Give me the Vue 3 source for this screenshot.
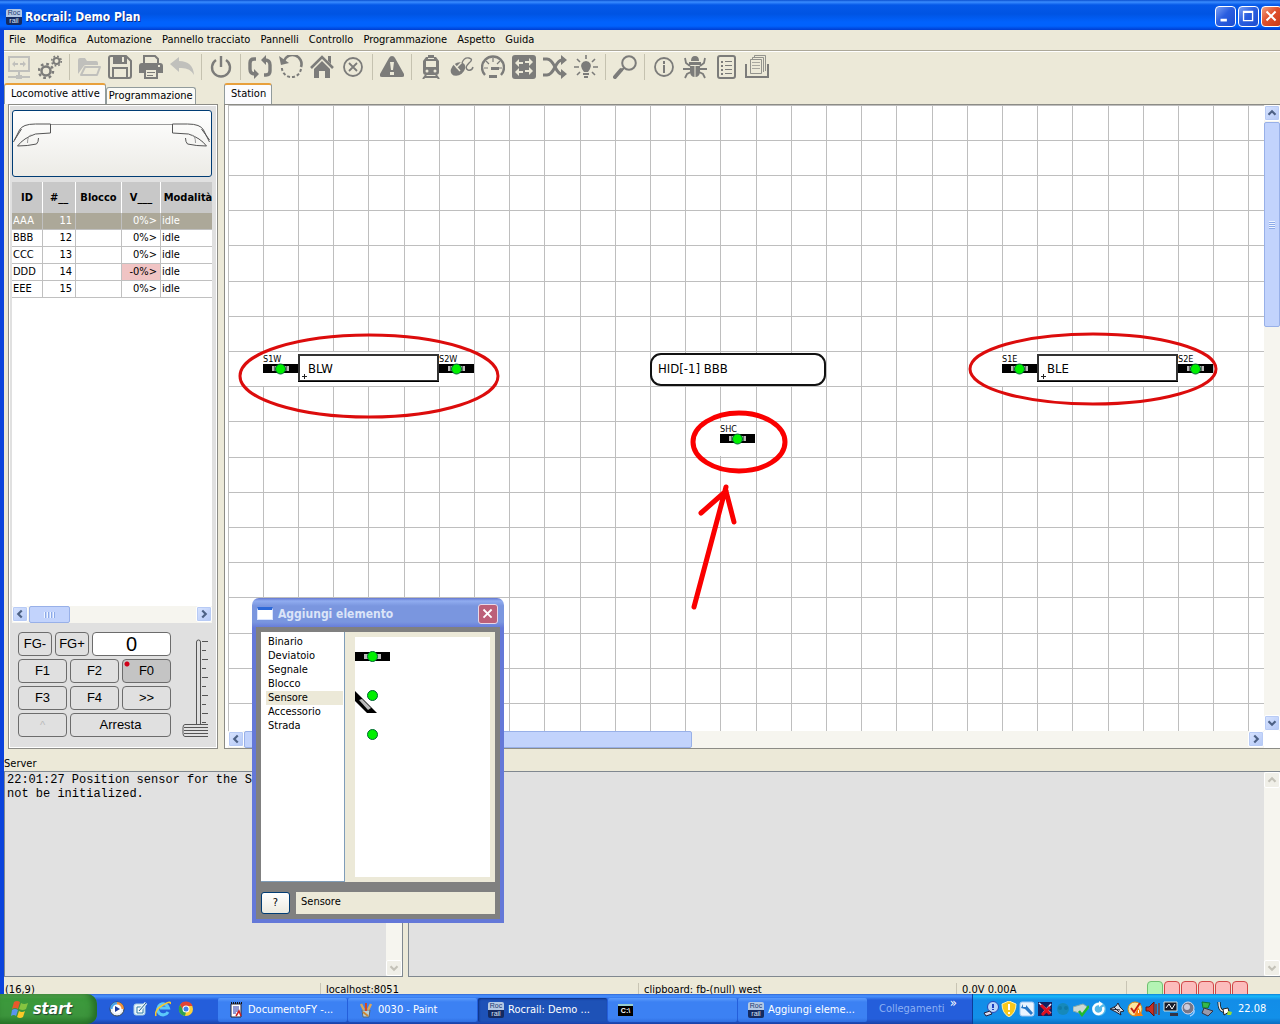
<script setup>
import { ref } from 'vue'

const menus = ['File', 'Modifica', 'Automazione', 'Pannello tracciato', 'Pannelli', 'Controllo', 'Programmazione', 'Aspetto', 'Guida']

const tools = [
  { name: 'Connetti', off: true, svg: '<path d="M2 2h20v14H2z" fill="none" stroke="currentColor" stroke-width="2"/><path d="M5 9l3-3v2h3v2H8v2zM19 9l-3-3v2h-3v2h3v2zM11 16h2v4h-2zM1 21h8v2H1zM15 21h8v2h-8zM9 20h6v4H9z"/>' },
  { name: 'Impostazioni', svg: '<circle cx="8" cy="16" r="4.5" fill="none" stroke="currentColor" stroke-width="2.5"/><circle cx="8" cy="16" r="7" fill="none" stroke="currentColor" stroke-width="2.5" stroke-dasharray="2.7 2.8"/><circle cx="18.5" cy="6" r="3" fill="none" stroke="currentColor" stroke-width="2"/><circle cx="18.5" cy="6" r="4.8" fill="none" stroke="currentColor" stroke-width="1.6" stroke-dasharray="1.8 1.97"/>' },
  { sep: true },
  { name: 'Apri', off: true, svg: '<path d="M1 19V5q0-2 2-2h5l2 3h9q2 0 2 2v2H9q-2 0-3 2z"/><path d="M4 20l4-8h15l-3 8z" fill="#ece9d8" stroke="currentColor" stroke-width="2" stroke-linejoin="round"/>' },
  { name: 'Salva', svg: '<path d="M3 1h15l5 5v15q0 2-2 2H3q-2 0-2-2V3q0-2 2-2z" fill="none" stroke="currentColor" stroke-width="2"/><path d="M5 1h14v8H5zM4 12h16v11H4z"/><path d="M14 2h2v5h-2zM6 14h12v8H6z" fill="#ece9d8"/>' },
  { name: 'Stampa', svg: '<path d="M5 8V1h11l3 3v4" fill="none" stroke="currentColor" stroke-width="2"/><path d="M3 8h18q3 0 3 3v7h-5v-3H5v3H0v-7q0-3 3-3z"/><path d="M6 14h12v9H6z" fill="#ece9d8" stroke="currentColor" stroke-width="2"/><path d="M8 17h8v1H8zM8 20h6v1H8z"/><path d="M19 10h2v2h-2z" fill="#ece9d8"/>' },
  { name: 'Annulla', off: true, svg: '<path d="M0 9l9-7v4q14 0 15 14-4-8-15-7v4z"/>' },
  { sep: true },
  { name: 'Alimentazione', svg: '<path d="M7 5a9 9 0 1 0 10 0M12 1v11" fill="none" stroke="currentColor" stroke-width="2.4"/>' },
  { sep: true },
  { name: 'Automatico', svg: '<path d="M8 4H6Q2 4 2 8v6q0 5 5 5M16 20h2q4 0 4-4v-6q0-5-5-5" fill="none" stroke="currentColor" stroke-width="3.4"/><path d="M6 14l5 5-5 5zM18 0l-5 5 5 5z"/>' },
  { name: 'Ripristina', svg: '<path d="M5 6a9 9 0 0 1 17 6" fill="none" stroke="currentColor" stroke-width="2.6"/><path d="M22 14a9 9 0 1 1-19-3" fill="none" stroke="currentColor" stroke-width="2" stroke-dasharray="3 2"/><path d="M0 1l2 9 8-2z"/>' },
  { name: 'Home', svg: '<path d="M1 13L12 2l11 11" fill="none" stroke="currentColor" stroke-width="2.6"/><path d="M4 14l8-8 8 8v9h-5v-7H9v7H4zM18 1h3v8l-3-3z"/>' },
  { name: 'Ferma tutto', svg: '<circle cx="12" cy="12" r="9" fill="none" stroke="currentColor" stroke-width="1.8"/><path d="M8 8l8 8M16 8l-8 8" stroke="currentColor" stroke-width="1.8"/>' },
  { sep: true },
  { name: 'Emergenza', svg: '<path d="M12 1q2 0 3 2l9 16q1 3-2 3H2q-3 0-2-3L9 3q1-2 3-2z"/><path d="M10 7h4l-1 8h-2zM10 17h4v3h-4z" fill="#ece9d8"/>' },
  { sep: true },
  { name: 'Locomotive', svg: '<path d="M9 0h6v2H9zM7 2h10l3 4v11q0 3-3 3H7q-3 0-3-3V6z"/><path d="M7 6h10v6H7zM9 3h6v1H9z" fill="#ece9d8"/><circle cx="8" cy="16" r="1.5" fill="#ece9d8"/><circle cx="16" cy="16" r="1.5" fill="#ece9d8"/><path d="M7 20l-3 4M17 20l3 4M6 22h12" stroke="currentColor" stroke-width="2"/>' },
  { name: 'Controller', svg: '<ellipse cx="8" cy="14" rx="8" ry="6" transform="rotate(-38 8 14)"/><path d="M3 8l7 8M6 13l6-6" stroke="#ece9d8" stroke-width="1.5"/><path d="M12 8Q14 2 19 3q5 1 0 5-5 5-1 7 4 1 5-3" fill="none" stroke="currentColor" stroke-width="1.4"/>' },
  { name: 'Velocità', svg: '<path d="M4 20a11 11 0 1 1 16 0" fill="none" stroke="currentColor" stroke-width="2.4"/><path d="M12 3v4M3 13h4M5 6l3 3M19 6l-3 3M17 13h4" stroke="currentColor" stroke-width="1.2"/><path d="M10 12h8v3h-8zM8 20h8v3H8z"/>' },
  { name: 'Scambi', svg: '<rect width="24" height="24" rx="3"/><path d="M3 8l4-4v3h4v2H7v3zM21 7l-4-4v3h-4v2h4v3zM3 17l4-4v3h4v2H7v3zM21 16l-4-4v3h-4v2h4v3z" fill="#ece9d8"/>' },
  { name: 'Itinerari', svg: '<path d="M0 4h4q4 0 8 8t8 7M0 20h4q4 0 8-8t8-7" fill="none" stroke="currentColor" stroke-width="3"/><path d="M18 0l6 5-6 5zM18 14l6 5-6 5z"/>' },
  { name: 'Luci', svg: '<path d="M12 6a5 5 0 0 1 4 8l-2 3h-4l-2-3a5 5 0 0 1 4-8zM9 18h6v2H9zM10 21h4v2h-4z"/><path d="M12 0v4M0 12h5M19 12h5M3 4l3 3M21 4l-3 3M3 20l3-3M21 20l-3-3" stroke="currentColor" stroke-width="1.6"/>' },
  { sep: true },
  { name: 'Cerca', svg: '<circle cx="16" cy="8" r="6.8" fill="none" stroke="currentColor" stroke-width="2"/><path d="M11 13l-3 3" stroke="currentColor" stroke-width="2"/><path d="M8 15l-6 7" stroke="currentColor" stroke-width="4" stroke-linecap="round"/>' },
  { sep: true },
  { name: 'Informazioni', svg: '<circle cx="12" cy="12" r="9" fill="none" stroke="currentColor" stroke-width="1.8"/><path d="M11 6h2v3h-2zM11 10h2v8h-2z"/>' },
  { name: 'Debug', svg: '<path d="M8 6q0-5 4-5t4 5zM6 7h12v3H6zM7 11h10v5q0 6-5 6t-5-6z"/><path d="M12 11v11" stroke="#ece9d8"/><path d="M7 11L3 8 2 3M17 11l4-3 1-5M7 14H0M17 14h7M8 17l-4 2-2 4M16 17l4 2 2 4" fill="none" stroke="currentColor" stroke-width="1.8"/>' },
  { name: 'Registro', svg: '<rect x="4" y="1" width="17" height="22" rx="2" fill="none" stroke="currentColor" stroke-width="2"/><path d="M7 6h2v2H7zM11 6h7v1h-7zM7 10h2v2H7zM11 10h7v1h-7zM7 14h2v2H7zM11 14h7v1h-7zM7 18h2v2H7zM11 18h7v1h-7z"/>' },
  { name: 'Archivio', svg: '<path d="M1 9v13h22V9" fill="none" stroke="currentColor" stroke-width="2"/><path d="M5.500 4.500h11v14h-11zM7.500 4V2.500h11V17M9.500 2V.5h11V16" fill="none" stroke="currentColor" stroke-width=".8"/><path d="M7 7.500h8M7 10.500h8M7 13.500h8" stroke="currentColor" stroke-width=".6"/>' }
]

const locos = [
  { id: 'AAA', n: 11, v: '0%>', sel: true },
  { id: 'BBB', n: 12, v: '0%>' },
  { id: 'CCC', n: 13, v: '0%>' },
  { id: 'DDD', n: 14, v: '-0%>', neg: true },
  { id: 'EEE', n: 15, v: '0%>' }
]

// The plan is drawn on a grid whose cells measure 176/5 px
const line = k => Math.floor(k * 176 / 5)
const lines = Array.from({ length: 60 }, (_, k) => line(k))
const sensors = [
  { id: 'S1W', col: 1, row: 7 }, { id: 'S2W', col: 6, row: 7 }, { id: 'SHC', col: 14, row: 9 },
  { id: 'S1E', col: 22, row: 7 }, { id: 'S2E', col: 27, row: 7 }
]
const blocks = [{ id: 'BLW', col: 2, row: 7 }, { id: 'BLE', col: 23, row: 7 }]

const kinds = ['Binario', 'Deviatoio', 'Segnale', 'Blocco', 'Sensore', 'Accessorio', 'Strada']
const kind = ref('Sensore')
const speed = ref('0')

const tasks = [
  { text: 'DocumentoFY -...', icon: 'doc' },
  { text: '0030 - Paint', icon: 'paint' },
  { text: 'Rocrail: Demo ...', icon: 'roc', on: true },
  { text: '', icon: 'cmd' },
  { text: 'Aggiungi eleme...', icon: 'roc' }
]
const leds = ['g', 'r', 'r', 'r', 'r', 'r']

const quick = [
  '<circle cx="8" cy="8" r="7" fill="#e9eef6" stroke="#345"/><path d="M8 1a7 7 0 0 1 7 7h-4L8 4z" fill="#f0913a"/><path d="M1 8a7 7 0 0 1 7-7v4L5 8z" fill="#4aa3e8"/><circle cx="8" cy="8" r="4.5" fill="#fff"/><path d="M6 5l5 3-5 3z" fill="#1c3a9c"/>',
  '<rect x="2" y="3" width="11" height="11" rx="2" fill="#e8f4fa" stroke="#a8d0e4"/><path d="M5 6h6v6H5z" fill="#fff" stroke="#2b7ba8"/><path d="M7 10l7-8" stroke="#e8f4fa" stroke-width="3"/><path d="M7 10l7-8" stroke="#1f5f90"/>',
  '<path d="M13 11a5.500 5.500 0 1 1 .5-4H5" fill="none" stroke="#5cc8fa" stroke-width="3"/><path d="M1 15Q-1 9 8 4t7-1" fill="none" stroke="#f7c92e" stroke-width="1.5"/>',
  '<circle cx="8" cy="8" r="7" fill="#fcd13a"/><path d="M2 4a7 7 0 0 1 12.500 1H8L5 9z" fill="#e24335"/><path d="M2 4l4 6 2 1-1 4A7 7 0 0 1 2 4z" fill="#2fa04f"/><circle cx="8" cy="8" r="3.500" fill="#fff"/><circle cx="8" cy="8" r="2.500" fill="#3f80ee"/>'
]
const tray = [
  '<circle cx="10" cy="6" r="5.500" fill="#b9d4fa" stroke="#2448b8"/><path d="M9 3h2v4H9zM9 8h2v1H9z" fill="#2040c0"/><path d="M1 12l6-2 2 3-6 2z" fill="#dde" stroke="#224"/>',
  '<path d="M8 0l7 3q0 9-7 13Q1 12 1 3z" fill="#f8c81c" stroke="#fff3b0"/><path d="M7 3h2v6H7zM7 11h2v2H7z" fill="#fff"/>',
  '<rect x="1" y="1" width="14" height="14" rx="2" fill="#eaf4ff" stroke="#9cc4f0"/><path d="M4 3v3h3V4l7 8-2 2-6-6-4-1z" fill="#2878c8"/>',
  '<path d="M1 1h14v14H1z" fill="#152060"/><path d="M2 2l12 10M6 12l8-9" stroke="#e8e8ff" stroke-width="1.500"/><path d="M4 4l9 9M13 6l-8 8" stroke="#e01020" stroke-width="3"/>',
  '<circle cx="8" cy="8" r="6" fill="#1689ba"/><circle cx="5" cy="7" r="2" fill="#107aa8"/><circle cx="11" cy="7" r="2" fill="#107aa8"/>',
  '<path d="M0 6l10-3 6 4-7 6-9-3z" fill="#ccd8d4" stroke="#8aa"/><path d="M6 10l3 4 7-9" fill="none" stroke="#20b830" stroke-width="2.500"/>',
  '<circle cx="8" cy="8" r="7" fill="#55b8e8"/><path d="M12 6a5 5 0 1 1-4-3" fill="none" stroke="#fff" stroke-width="2.500"/><path d="M8 0l4 3-4 3z" fill="#fff"/>',
  '<path d="M1 8l6-3 2-3 2 4 4 4-4 1 1 3-5-3z" fill="#d8dde6" stroke="#223"/><path d="M2 8l9 1M5 6l5 5" stroke="#223"/>',
  '<circle cx="8" cy="8" r="7" fill="#fbe6a0" stroke="#d88a10"/><path d="M4 7l3 4 6-9" fill="none" stroke="#c82010" stroke-width="2"/><path d="M11 6l5 9H7z" fill="#f88010"/><path d="M11 9h1v3h-1z" fill="#fff"/>',
  '<path d="M1 6h3l5-5v14l-5-5H1z" fill="#c83020" stroke="#601010"/><path d="M11 3v10M14 2v12" stroke="#80382c" stroke-width="1.500"/>',
  '<path d="M1 1h13v9H1z" fill="#181c28" stroke="#cdd"/><path d="M3 7l3-4 3 5 3-5" fill="none" stroke="#fff"/><path d="M7 12h8v3H7z" fill="#334"/>',
  '<circle cx="7" cy="7" r="6" fill="#778" stroke="#dde"/><circle cx="6" cy="6" r="3" fill="#ccd"/><path d="M13 9q1 4-4 6" fill="none" stroke="#9cf" stroke-width="1.500"/>',
  '<path d="M3 1l8 1-2 5H4z" fill="#38b848" stroke="#173"/><path d="M5 7l9 3-5 5-6-3z" fill="#99a" stroke="#334"/>',
  '<path d="M2 1q0 8 4 9l6 1" fill="none" stroke="#111" stroke-width="3"/><path d="M2 1q0 8 4 9l6 1" fill="none" stroke="#eee" stroke-width="1.500"/><path d="M6 8l5-1 1 4-5 3z" fill="#fff" stroke="#222"/><path d="M11 10l4 1-1 3-4 0z" fill="#9d3"/>'
]
</script>

<template>
  <div class="screen">
    <header class="titlebar">
      <span class="roc"><i>Roc</i><i>rail</i></span>
      <h1>Rocrail: Demo Plan</h1>
      <div class="winbtns">
        <button aria-label="Riduci a icona"><svg viewBox="0 0 21 21"><path d="M5 13h7v3H5z" fill="#fff" /></svg></button>
        <button aria-label="Ingrandisci"><svg viewBox="0 0 21 21"><path d="M5 5h10v10H5zM5 6h10" fill="none" stroke="#fff" stroke-width="1.500" /></svg></button>
        <button class="red" aria-label="Chiudi"><svg viewBox="0 0 21 21"><path d="M5 5l10 10M15 5L5 15" stroke="#fff" stroke-width="2.200" /></svg></button>
      </div>
    </header>

    <div class="window">
      <nav class="menubar"><button v-for="m in menus" :key="m">{{ m }}</button></nav>
      <div class="toolbar">
        <template v-for="(t, i) in tools" :key="i">
          <span v-if="t.sep" class="sep"></span>
          <button v-else :class="{ off: t.off }" :aria-label="t.name"><svg viewBox="0 0 24 24" fill="currentColor" v-html="t.svg"></svg></button>
        </template>
      </div>

      <main>
        <section class="left">
          <div class="tabs"><button class="tab on">Locomotive attive</button><button class="tab">Programmazione</button></div>
          <div class="panel">
            <button class="locoimg" aria-label="Immagine locomotiva">
              <svg viewBox="0 0 197 64" fill="none" stroke="#555">
                <path d="M37 12.500h122" stroke="#999" />
                <path d="M37 12v9l-15 1Q10 26 4 34q10 0 19-2 2-2 2-6M37 12H22Q9 12 6 18L0 30M8 17L1 28" />
                <path d="M14 31q0-8 4-8" stroke="#999" />
                <path d="M159 12v9l16 1q12 4 18 12-10 0-19-2-2-2-2-6M159 12h15q13 0 16 6l6 12M188 17l8 11" />
                <path d="M182 31q0-8-4-8" stroke="#999" />
              </svg>
            </button>
            <div class="tablebox">
              <table>
                <colgroup><col class="c1"><col class="c2"><col class="c3"><col class="c4"><col class="c5"></colgroup>
                <thead><tr><th>ID</th><th>#__</th><th>Blocco</th><th>V___</th><th>Modalità</th></tr></thead>
                <tbody>
                  <tr v-for="l in locos" :key="l.id" :class="{ sel: l.sel }">
                    <td>{{ l.id }}</td><td class="num">{{ l.n }}</td><td></td><td class="num" :class="{ neg: l.neg }">{{ l.v }}</td><td>idle</td>
                  </tr>
                </tbody>
              </table>
            </div>
            <div class="hscroll small">
              <button class="sb" aria-label="Sinistra"><svg viewBox="0 0 16 16"><path d="M10 4L6 8l4 4" /></svg></button>
              <span class="thumb grip"></span><span class="space"></span>
              <button class="sb" aria-label="Destra"><svg viewBox="0 0 16 16"><path d="M6 4l4 4-4 4" /></svg></button>
            </div>
            <div class="throttle">
              <div class="keys">
                <div class="krow"><button class="fg">FG-</button><button class="fg">FG+</button><input v-model="speed" aria-label="Velocità"></div>
                <div class="krow"><button>F1</button><button>F2</button><button class="pressed">F0</button></div>
                <div class="krow"><button>F3</button><button>F4</button><button>&gt;&gt;</button></div>
                <div class="krow"><button class="dim">^</button><button class="wide">Arresta</button></div>
              </div>
              <svg class="slider" viewBox="0 0 26 100" fill="none" stroke="#555">
                <path d="M14.500 87V5q0-2 2-2t2 2v82M20 4.500h6M20 13.500h4M20 22.500h6M20 31.500h4M20 40.500h6M20 49.500h4M20 58.500h6M20 67.500h4M20 76.500h6M20 85.500h4" />
                <path d="M26 87.500H3q-2 0-2 3v6q0 3 2 3h23M2 90.500h24M2 93.500h24M2 96.500h24" />
              </svg>
            </div>
          </div>
        </section>

        <section class="right">
          <div class="tabs"><button class="tab on">Station</button></div>
          <div class="planbox">
            <div class="planrow">
              <svg class="plan">
                <g stroke="#bebebe" shape-rendering="crispEdges">
                  <line v-for="x in lines" :key="'x' + x" :x1="x + 0.5" :x2="x + 0.5" y1="0" y2="2000" />
                  <line v-for="y in lines" :key="'y' + y" :y1="y + 0.5" :y2="y + 0.5" x1="0" x2="2000" />
                </g>
                <g v-for="s in sensors" :key="s.id" :transform="`translate(${line(s.col)} ${line(s.row)})`">
                  <rect y="1" width="35" height="34" fill="#fff" />
                  <rect y="13" width="35" height="9" />
                  <rect x="9" y="15" width="17" height="5" fill="#bbb" />
                  <path d="M11.500 15v5M23.500 15v5" stroke="#666" />
                  <circle cx="17.500" cy="18" r="5" fill="#00f000" stroke="#063" />
                  <text x="0" y="11" class="tiny">{{ s.id }}</text>
                </g>
                <g v-for="b in blocks" :key="b.id" :transform="`translate(${line(b.col)} ${line(b.row)})`">
                  <rect y="1" width="140" height="34" fill="#fff" />
                  <rect x="1" y="4" width="139" height="26" fill="#fff" stroke="#333" stroke-width="2" />
                  <path d="M0 30.500h141" stroke="#000" />
                  <path d="M4 25.500h5M6.500 23v5" stroke="#222" />
                  <text x="10" y="22" class="name">{{ b.id }}</text>
                </g>
                <rect x="423" y="249" width="174" height="31" rx="10" fill="#fff" stroke="#111" stroke-width="2" />
                <text x="430" y="268" class="name">HID[-1] BBB</text>
                <g fill="none" stroke="#dc0c0c" stroke-width="3">
                  <ellipse cx="141" cy="271" rx="129" ry="41" />
                  <ellipse cx="865" cy="264" rx="123" ry="35" />
                </g>
                <g fill="none" stroke="#fa0000" stroke-width="5" stroke-linecap="round">
                  <ellipse cx="511" cy="337" rx="46" ry="29" />
                  <path d="M466 502L498 382M498 386L473 408M498 386L506 417" />
                </g>
              </svg>
              <div class="vscroll">
                <button class="sb" aria-label="Su"><svg viewBox="0 0 16 16"><path d="M4 10l4-4 4 4" /></svg></button>
                <span class="thumb vgrip"></span><span class="space"></span>
                <button class="sb" aria-label="Giù"><svg viewBox="0 0 16 16"><path d="M4 6l4 4 4-4" /></svg></button>
              </div>
            </div>
            <div class="hscroll big">
              <button class="sb" aria-label="Sinistra"><svg viewBox="0 0 16 16"><path d="M10 4L6 8l4 4" /></svg></button>
              <span class="thumb"></span><span class="space"></span>
              <button class="sb" aria-label="Destra"><svg viewBox="0 0 16 16"><path d="M6 4l4 4-4 4" /></svg></button>
            </div>
          </div>
        </section>
      </main>

      <h2>Server</h2>
      <div class="logs">
        <div class="log first"><p>22:01:27 Position sensor for the Se<br>not be initialized.</p>
          <div class="vscroll dead"><span class="space"></span><button class="sb" aria-label="Giù"><svg viewBox="0 0 16 16"><path d="M4 6l4 4 4-4" /></svg></button></div>
        </div>
        <div class="log second">
          <div class="vscroll dead"><button class="sb" aria-label="Su"><svg viewBox="0 0 16 16"><path d="M4 10l4-4 4 4" /></svg></button><span class="space"></span><button class="sb" aria-label="Giù"><svg viewBox="0 0 16 16"><path d="M4 6l4 4 4-4" /></svg></button></div>
        </div>
      </div>
      <footer class="status">
        <span>(16,9)</span><span>localhost:8051</span><span>clipboard: fb-(null) west</span><span>0.0V 0.00A</span>
        <span class="leds"><i v-for="(l, i) in leds" :key="i" :class="l"></i></span>
      </footer>
    </div>

    <div class="taskbar">
      <button class="start">
        <svg viewBox="0 0 18 18"><path d="M3 2q3-2 6 0L7 9Q4 7 1 9z" fill="#e8582c" /><path d="M10 3q3 2 7 0l-2 6q-3 2-7 0z" fill="#86c440" /><path d="M1 10q3-2 6 0l-2 6q-2-2-5 0z" fill="#5a94ee" /><path d="M8 11q3 2 6 0l-2 6q-3 2-6 0z" fill="#fbc928" /></svg>
        <b>start</b>
      </button>
      <div class="quick"><svg v-for="(q, i) in quick" :key="i" viewBox="0 0 16 16" v-html="q"></svg></div>
      <div class="tasks">
        <button v-for="(t, i) in tasks" :key="i" :class="{ on: t.on }" :aria-label="t.text || 'Prompt dei comandi'">
          <span v-if="t.icon === 'roc'" class="roc"><i>Roc</i><i>rail</i></span>
          <span v-else-if="t.icon === 'cmd'" class="cmd">C:\</span>
          <svg v-else-if="t.icon === 'doc'" viewBox="0 0 16 16"><path d="M3 2h10v13H3z" fill="#fff" stroke="#223" /><path d="M3 1h11" stroke="#111" stroke-width="2" stroke-dasharray="1 1" /><path d="M5 5h6M5 7h6M5 9h6M5 11h3" stroke="#2233a8" /><path d="M8 14l3-5 2 5" fill="none" stroke="#d02020" stroke-width="1.500" /></svg>
          <svg v-else viewBox="0 0 16 16"><path d="M4 8h8l-1 7H5z" fill="#b8d0d8" stroke="#567" /><path d="M6 8L3 2M10 8l3-6" stroke="#d8a860" stroke-width="2.500" /><path d="M8 9V1" stroke="#d04828" stroke-width="2" /><path d="M5 10l5 4" stroke="#c83" stroke-width="2" /></svg>
          <span>{{ t.text }}</span>
        </button>
      </div>
      <div class="links"><span>Collegamenti</span><b>»</b></div>
      <div class="tray"><svg v-for="(q, i) in tray" :key="i" viewBox="0 0 16 16" v-html="q"></svg><time>22.08</time></div>
    </div>

    <div class="dialog" role="dialog" aria-label="Aggiungi elemento">
      <div class="dtitle"><span class="dico"></span><b>Aggiungi elemento</b>
        <button aria-label="Chiudi"><svg viewBox="0 0 20 20"><path d="M5 5l9 9M14 5l-9 9" stroke="#fff" stroke-width="2" /></svg></button>
      </div>
      <div class="dbody">
        <div class="dmain">
          <div class="kinds"><button v-for="k in kinds" :key="k" :class="{ on: k === kind }" @click="kind = k">{{ k }}</button></div>
          <div class="preview">
            <svg viewBox="0 0 135 240" preserveAspectRatio="xMinYMin">
              <rect y="15" width="35" height="9" /><rect x="9" y="17" width="17" height="5" fill="#bbb" />
              <path d="M0 54L22 76H12L0 64z" /><path d="M4 63l3-1 9 9-3 2z" fill="#bbb" />
              <g fill="#00f000" stroke="#063"><circle cx="17.500" cy="19.500" r="5" /><circle cx="17.500" cy="58.500" r="5" /><circle cx="17.500" cy="97.500" r="5" /></g>
            </svg>
          </div>
        </div>
        <div class="dfoot"><button aria-label="Aiuto">?</button><input :value="kind" readonly aria-label="Tipo"></div>
      </div>
    </div>
  </div>
</template>

<style>
body { margin: 0; }
</style>

<style scoped>
* { box-sizing: border-box; }
.screen { position: relative; display: flex; flex-direction: column; height: 100vh; overflow: hidden; background: #ece9d8; color: #000; font: 11px/14px "DejaVu Sans Condensed", Tahoma, sans-serif; }
button, input { font: inherit; color: inherit; margin: 0; padding: 0; border: 0; background: none; }
svg { display: block; }
i { font-style: normal; }
.titlebar { flex: none; display: flex; align-items: center; height: 30px; padding: 3px 0 0 6px; background: linear-gradient(#0a4fd0, #3a8cff 2px, #0458e8 5px, #0054e3 14px, #0162fd 22px, #0162fd 26px, #003dd0 30px); }
h1 { flex: 1; margin: 0 0 0 3px; color: #fff; font: bold 12px/16px "DejaVu Sans Condensed", sans-serif; text-shadow: 1px 1px #0a2c88; }
.roc { flex: none; display: flex; flex-direction: column; width: 16px; height: 16px; border-radius: 2px; background: linear-gradient(#b4c8e4 50%, #142a60 50%); color: #1c3870; font: 7px/8px "Liberation Sans", sans-serif; text-align: center; }
.roc i + i { color: #dde6f8; }
.winbtns { display: flex; gap: 2px; margin-right: -2px; }
.winbtns button { width: 21px; height: 21px; border: 1px solid #fff; border-radius: 4px; background: linear-gradient(135deg, #7ba0f4, #2a5ee0 45%, #1c4cd0); }
.winbtns .red { background: linear-gradient(135deg, #f0a080, #e0502c 45%, #c83a18); }
.window { flex: 1; min-height: 0; display: flex; flex-direction: column; border-left: 4px solid #0b43dc; }
.menubar { flex: none; display: flex; gap: 10px; height: 21px; padding-left: 5px; border-bottom: 1px solid #aca899; }
.toolbar { flex: none; display: flex; align-items: center; height: 32px; padding-bottom: 2px; border-top: 1px solid #fff; }
.toolbar button { width: 31px; padding: 0 4px 0 3px; color: #7c7c7a; }
.toolbar .off { color: #c0c0bc; }
.toolbar svg { width: 24px; height: 24px; }
.sep { width: 1px; height: 26px; margin: 0 4px 0 3px; background: #c5c2b0; }
main { flex: 1; min-height: 0; display: flex; gap: 6px; }
.left { flex: none; width: 214px; display: flex; flex-direction: column; }
.tabs { flex: none; display: flex; align-items: flex-end; height: 21px; }
.tab { height: 17px; padding: 0 2px; border: 1px solid #919b9c; border-bottom: 0; border-radius: 3px 3px 0 0; background: #fafaf6; }
.tab.on { height: 21px; padding: 0 5px 2px 6px; border-top: 2px solid #e8a03c; background: #fcfcfe; }
.panel { flex: 1; min-height: 0; display: flex; flex-direction: column; margin: 0 0 1px 4px; padding: 4px 4px 0 3px; border: 2px solid #8c8c86; border-width: 2px 2px 2px 1px; outline: 1px solid #fff; outline-offset: -2px; background: #e0e0e0; }
.locoimg { flex: none; height: 67px; border: 1px solid #003c74; border-radius: 3px; background: linear-gradient(#fff, #ecebe6); }
.locoimg svg { width: 100%; height: 64px; }
.tablebox { flex: 1; min-height: 0; margin-top: 5px; overflow: hidden; background: #fff; }
table { width: 204px; table-layout: fixed; border-collapse: separate; border-spacing: 0; }
.c1 { width: 31px; } .c2 { width: 33px; } .c3 { width: 46px; } .c4 { width: 39px; } .c5 { width: 55px; }
th { height: 31px; padding: 0; background: #c8c8c8; border-right: 1px solid #fff; font: bold 11px/14px "DejaVu Sans Condensed", sans-serif; white-space: nowrap; }
td { height: 17px; padding: 0 1px; border: solid #c0c0c0; border-width: 0 1px 1px 0; line-height: 14px; }
.num { text-align: right; }
td.num { padding-right: 3px; }
.sel td { background: #aca899; color: #fff; }
td.neg { background: #f0c4c4; }
.hscroll { flex: none; display: flex; height: 17px; background: #f6f5ef; }
.sb { flex: none; width: 16px; height: 16px; border: 1px solid #fff; border-radius: 2px; background: linear-gradient(135deg, #d8e4ff, #b4c8f6); box-shadow: inset 0 0 0 1px #b8cbf5; }
.sb svg { width: 14px; height: 14px; fill: none; stroke: #4d6185; stroke-width: 2.500; }
.thumb { flex: none; border: 1px solid #98b0e8; border-radius: 2px; background: #c2d3fc; }
.grip { background: repeating-linear-gradient(90deg, #eef4ff 0 1px, #8caae8 1px 2px, #c2d3fc 2px 3px) center / 12px 6px no-repeat #c2d3fc; }
.vgrip { background: repeating-linear-gradient(#eef4ff 0 1px, #8caae8 1px 2px) center / 6px 8px no-repeat #c2d3fc; }
.space { flex: 1; }
.small .thumb { width: 41px; margin-left: 1px; }
.big .thumb { width: 448px; }
.throttle { flex: none; display: flex; justify-content: space-between; height: 124px; padding: 9px 4px 0 6px; }
.keys { display: flex; flex-direction: column; gap: 3px; width: 153px; }
.krow { display: flex; gap: 3px; height: 24px; }
.krow button, .krow input { flex: 1 1 0; min-width: 0; height: 24px; border: 1px solid #6c6c6c; border-radius: 4px; font: 13px/20px "Liberation Sans", sans-serif; text-align: center; }
.krow .fg { flex: none; width: 34px; }
.krow input { background: #fff; font-size: 20px; }
.krow .wide { flex: none; width: 101px; }
.krow .pressed { background: radial-gradient(circle at 4px 4px, #d00018 2px, transparent 3px) #c4c4c4; }
.krow .dim { color: #bbb; font-size: 11px; }
.slider { width: 26px; height: 100px; margin-top: 5px; }
.right { flex: 1; min-width: 0; display: flex; flex-direction: column; }
.planbox { flex: 1; min-height: 0; display: flex; flex-direction: column; margin-bottom: 1px; border: solid #8c8c86; border-width: 1px 0 1px 1px; padding-left: 3px; background: #fff; }
.planrow { flex: 1; min-height: 0; display: flex; }
.plan { flex: 1; min-width: 0; height: 100%; overflow: hidden; }
.vscroll { flex: none; display: flex; flex-direction: column; width: 16px; background: #f6f5ef; }
.planrow .vscroll .thumb { height: 205px; margin-top: 1px; }
.big { margin-right: 16px; }
.tiny { font: 9px "DejaVu Sans Condensed", sans-serif; }
.name { font: 13px "DejaVu Sans Condensed", sans-serif; }
h2 { flex: none; margin: 0; padding: 7px 0 0; height: 21px; font: inherit; }
.logs { flex: none; display: flex; gap: 5px; height: 206px; }
.log { display: flex; justify-content: flex-end; border: 1px solid #808890; background: #e1e1e1; }
.first { flex: none; width: 399px; }
.second { flex: 1; border-right: 0; }
.log p { flex: 1; margin: 1px 0 0 2px; font: 12px/14px "Liberation Mono", monospace; white-space: nowrap; }
.dead .sb { background: #f0efe8; box-shadow: none; }
.dead .sb svg { stroke: #c4c2b8; }
.status { flex: none; display: flex; height: 17px; padding-top: 6px; overflow: hidden; }
.status span { flex: none; width: 318px; padding-left: 1px; white-space: nowrap; }
.status span + span { padding-left: 5px; border-left: 1px solid #c8c4b4; }
.status span:nth-child(1) { width: 316px; }
.status span:nth-child(4) { width: 170px; }
.status .leds { display: flex; flex: 1; gap: 1px; padding-left: 20px; margin-top: -2px; }
.leds i { width: 16px; height: 18px; border: 1px solid #d04848; border-radius: 4px 4px 0 0; background: #fcbcbc; }
.leds .g { border-color: #70c070; background: #b4f4b4; }
.taskbar { flex: none; display: flex; height: 30px; color: #fff; background: linear-gradient(#3168d5, #4993ff 2px, #245edb 6px, #245edb 25px, #1941a5); }
.start { flex: none; display: flex; align-items: center; gap: 4px; width: 97px; padding-left: 11px; border-radius: 0 10px 10px 0; background: linear-gradient(#5eac56, #3c9a3c 5px, #3c943c 22px, #2a7a2c); box-shadow: inset -4px 0 6px #246c24; }
.start svg { width: 18px; height: 18px; }
.start b { font: italic bold 16px/20px "DejaVu Sans Condensed", sans-serif; text-shadow: 1px 1px 1px #243; }
.quick { flex: none; display: flex; align-items: center; gap: 7px; width: 121px; padding-left: 12px; }
.quick svg { width: 16px; height: 16px; }
.tasks { flex: 1; min-width: 0; display: flex; gap: 1px; padding: 4px 0 2px; }
.tasks button { flex: 0 1 129px; min-width: 0; display: flex; align-items: center; gap: 4px; padding-left: 10px; border-radius: 2px; background: linear-gradient(#5c9cfc, #3c81f3 4px, #3c81f3 20px, #2e6fe0); white-space: nowrap; overflow: hidden; }
.tasks .on { background: #1e52b7; box-shadow: inset 1px 1px 2px #0c3080; }
.tasks svg { flex: none; width: 16px; height: 16px; }
.cmd { width: 15px; height: 12px; border-top: 2px solid #9cc; background: #000; font: bold 7px/9px "Liberation Sans", sans-serif; text-align: center; }
.links { flex: none; display: flex; justify-content: space-between; width: 93px; padding: 8px 15px 0 0; color: #8cb0f4; }
.links b { margin-top: -6px; color: #fff; font: 13px/14px "DejaVu Sans Condensed", sans-serif; }
.tray { flex: none; display: flex; align-items: center; gap: 2px; width: 308px; padding-left: 10px; border-left: 1px solid #0c3c98; background: linear-gradient(#0c80d8, #18b9fa 2px, #128de8 6px, #1290e9 24px, #0b6cc0); }
.tray svg { flex: none; width: 16px; height: 16px; }
time { margin-left: 3px; }
.dialog { position: absolute; left: 252px; top: 598px; display: flex; flex-direction: column; width: 252px; height: 325px; padding: 0 4px 4px; border-radius: 7px 7px 0 0; background: linear-gradient(#6478d0, #90acf0 3px, #7a96df 8px, #7a96df 24px, #6478d8 30px); }
.dtitle { flex: none; display: flex; align-items: center; gap: 5px; height: 29px; padding: 2px 2px 0 1px; color: #dbe4f8; font: bold 12px/16px "DejaVu Sans Condensed", sans-serif; }
.dtitle b { flex: 1; }
.dico { width: 16px; height: 13px; border: 1px solid #d8e4ff; border-top: 3px solid #2c68d8; background: #fff; }
.dtitle button { width: 20px; height: 20px; border: 1px solid #e8d8e8; border-radius: 3px; background: #bc6078; }
.dbody { flex: 1; min-height: 0; display: flex; flex-direction: column; padding: 5px; background: #808080; }
.dmain { flex: 1; min-height: 0; display: flex; }
.kinds { flex: none; width: 84px; padding: 3px 1px 2px 5px; border: 1px solid #7f9db9; border-width: 0 1px 1px 0; background: #fff; }
.kinds button { display: block; width: 100%; height: 14px; padding-left: 2px; text-align: left; }
.kinds .on { background: #ece9d8; }
.preview { flex: 1; padding: 5px; padding-left: 10px; background: #ece9d8; }
.preview svg { width: 100%; height: 100%; background: #fff; }
.dfoot { flex: none; display: flex; gap: 6px; margin-top: 10px; height: 22px; }
.dfoot button { width: 29px; border: 1px solid #003c74; border-radius: 3px; background: linear-gradient(#fff, #eceae0); }
.dfoot input { flex: 1; min-width: 0; padding: 0 5px 2px; background: #ece9d8; }
</style>
